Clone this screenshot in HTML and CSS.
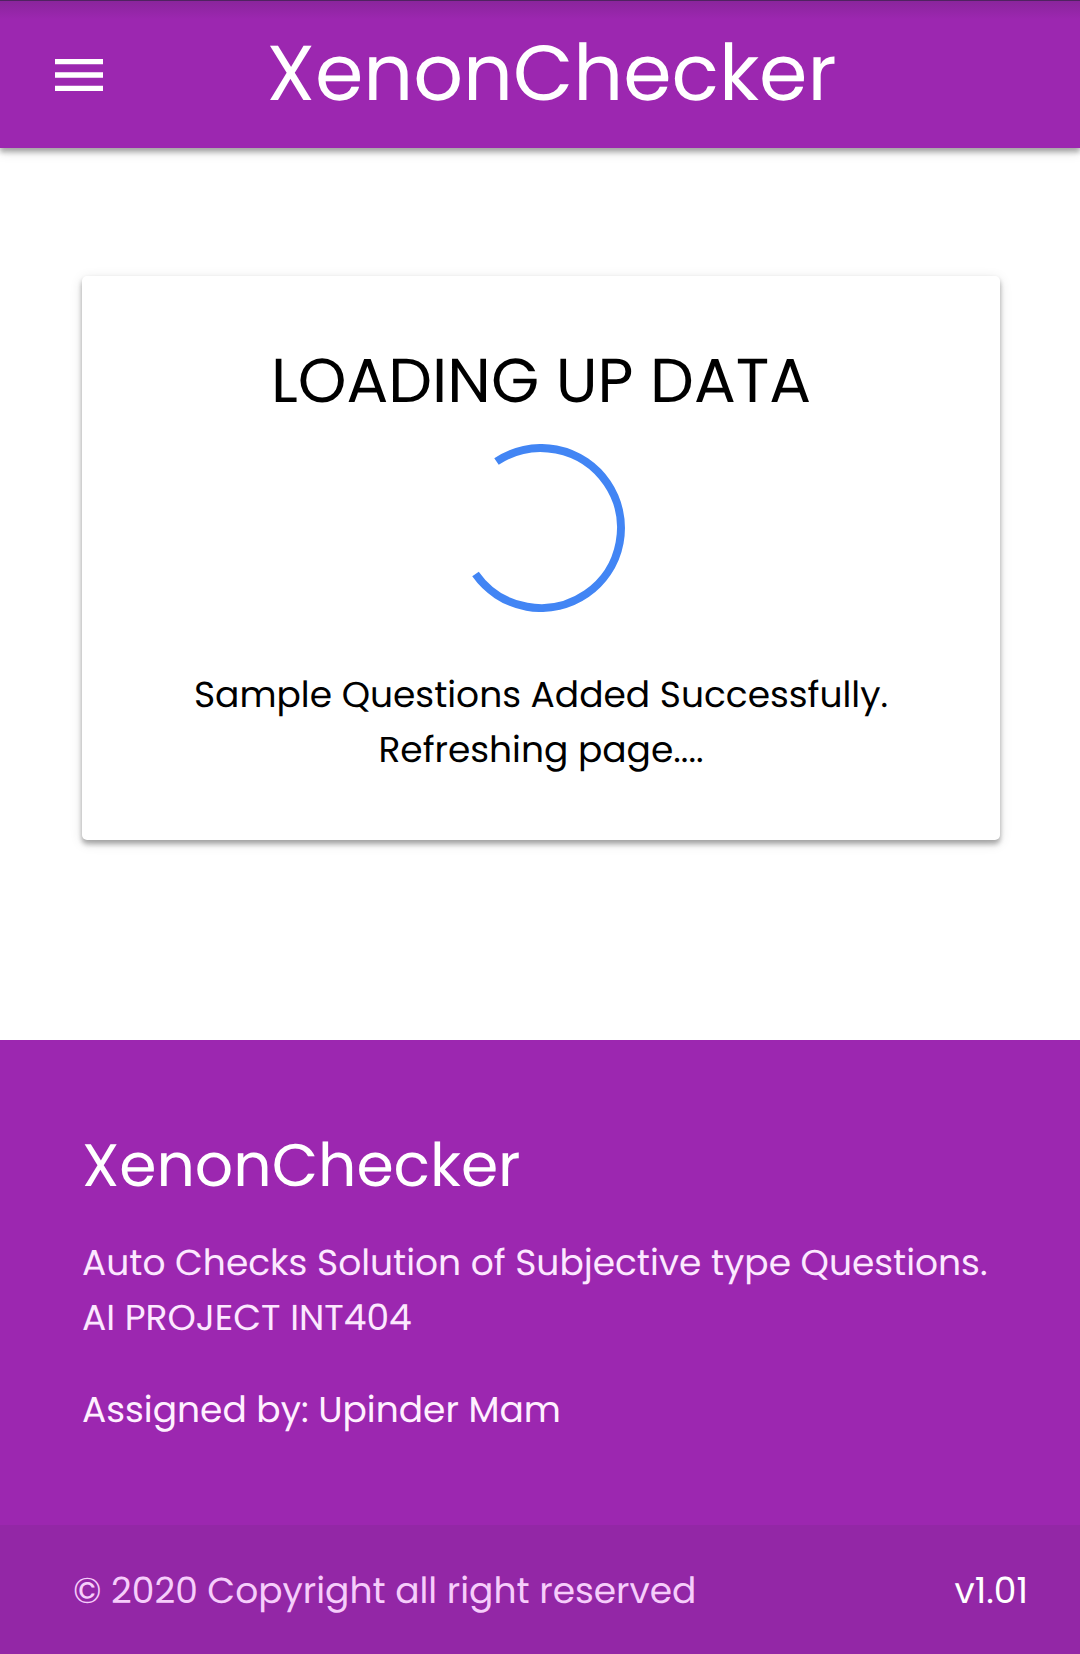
FILE: index.html
```html
<!DOCTYPE html>
<html lang="en">
<head>
<meta charset="utf-8">
<meta name="viewport" content="width=device-width, initial-scale=1">
<title>XenonChecker</title>
<link rel="stylesheet" href="styles.css">
</head>
<body>
<header class="navbar">
  <button class="menu-button" type="button" aria-label="Open menu">
    <svg class="menu-icon" viewBox="0 0 24 24" aria-hidden="true"><path fill="currentColor" d="M3 18h18v-2H3v2zm0-5h18v-2H3v2zm0-7v2h18V6H3z"/></svg>
  </button>
  <a class="brand" href="#">XenonChecker</a>
</header>
<main class="content">
  <section class="card" role="status">
    <h1 class="card-title">LOADING UP DATA</h1>
    <svg class="spinner" viewBox="0 0 168 168" aria-hidden="true"><path d="M39.5 17.5A80 80 0 1 1 18.5 130" fill="none" stroke="#4285f4" stroke-width="8"/></svg>
    <p class="card-text">Sample Questions Added Successfully.<br>Refreshing page....</p>
  </section>
</main>
<footer class="footer">
  <div class="footer-body">
    <h2 class="footer-title">XenonChecker</h2>
    <p class="footer-text">Auto Checks Solution of Subjective type Questions.<br>AI PROJECT INT404</p>
    <p class="footer-text footer-credit">Assigned by: Upinder Mam</p>
  </div>
  <div class="copyright">
    <span>© 2020 Copyright all right reserved</span>
    <a class="version" href="#">v1.01</a>
  </div>
</footer>
</body>
</html>
```
FILE: styles.css
```css
* {
  box-sizing: border-box;
}

body {
  margin: 0;
  min-height: 100vh;
  display: flex;
  flex-direction: column;
  background: #fff;
  color: #000;
  font-family: Poppins, Inter, sans-serif;
  font-size: 36px;
  line-height: 55px;
  text-rendering: geometricPrecision;
}

h1,
h2,
p {
  margin: 0;
  font-weight: inherit;
}

a {
  color: inherit;
  text-decoration: none;
}

.navbar {
  position: relative;
  display: grid;
  grid-template-columns: 1fr auto 1fr;
  align-items: center;
  height: 148px;
  padding: 0 24px 0 47px;
  border-top: 1px solid #4f2260;
  background: linear-gradient(#8a259c, #9c27b0 18px);
  color: #fff;
  box-shadow: 0 5px 5px rgba(0, 0, 0, 0.14), 0 3px 5px rgba(0, 0, 0, 0.2), 0 3px 13px rgba(0, 0, 0, 0.12);
}

.menu-button {
  justify-self: start;
  display: flex;
  padding: 0;
  border: 0;
  background: none;
  color: inherit;
}

.menu-icon {
  width: 64px;
  height: 64px;
}

.brand {
  padding-bottom: 2px;
  font-size: 78px;
  line-height: 144px;
}

.content {
  padding: 128px 80px 200px 82px;
}

.card {
  display: flex;
  flex-direction: column;
  align-items: center;
  padding: 64px 63px 63px;
  border-radius: 5px;
  text-align: center;
  box-shadow: 0 5px 5px rgba(0, 0, 0, 0.14), 0 3px 5px rgba(0, 0, 0, 0.2), 0 3px 13px rgba(0, 0, 0, 0.12);
}

.card-title {
  font-size: 62px;
  line-height: 82px;
}

.spinner {
  width: 168px;
  height: 168px;
  margin: 22px 0 55px;
}

.footer {
  flex: 1;
  display: flex;
  flex-direction: column;
  background: #9c27b0;
  color: #fff;
}

.footer-body {
  flex: 1;
  padding: 84px 80px 68px 82px;
}

.footer-title {
  font-size: 60px;
  line-height: 82px;
}

.footer-text {
  margin-top: 29px;
  color: #fce8ff;
}

.footer-credit {
  margin-top: 37px;
  color: #fff0ff;
}

.copyright {
  display: flex;
  justify-content: space-between;
  padding: 38px 52px 36px 73px;
  background: rgba(51, 51, 51, 0.08);
  color: #f6cdfb;
}

.version {
  color: #fff;
}
```
